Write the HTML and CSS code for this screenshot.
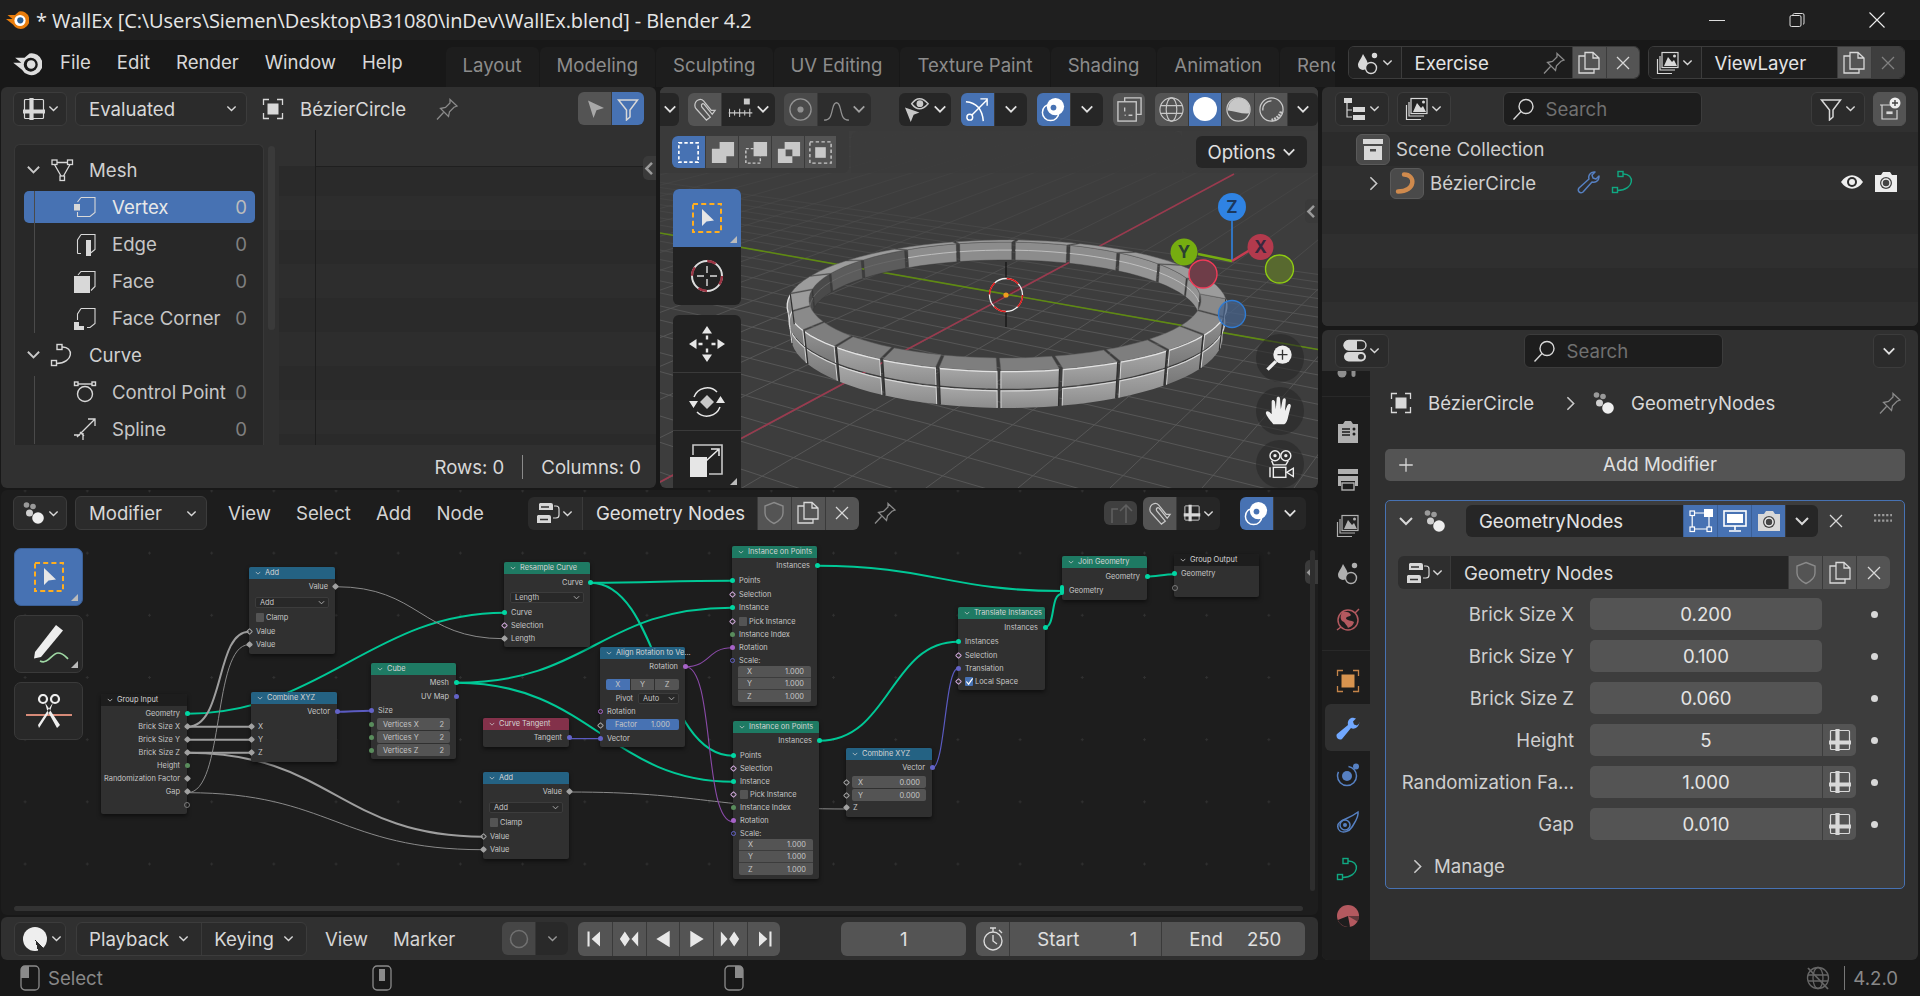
FILE: index.html
```html
<!DOCTYPE html>
<html lang="en">
<head>
<meta charset="utf-8">
<title>WallEx - Blender 4.2</title>
<link rel="stylesheet" href="styles.css">
</head>
<body>
<svg class="defs" width="0" height="0">
<defs>
<symbol id="chev" viewBox="0 0 12 12"><path d="M1.5 3.8 6 8.3l4.5-4.5" fill="none" stroke="currentColor" stroke-width="1.5"/></symbol>
<symbol id="chevr" viewBox="0 0 12 12"><path d="M3.5 1 8.5 6l-5 5" fill="none" stroke="currentColor" stroke-width="1.3"/></symbol>
<symbol id="chevl" viewBox="0 0 12 12"><path d="M8 1.5 3.5 6 8 10.5" fill="none" stroke="currentColor" stroke-width="2"/></symbol>
<symbol id="logoc" viewBox="0 0 24 24"><path fill="#e87d0d" d="M14 3.5 10 7H2.5l5 4H1l7 5.5A8.8 8.8 0 1 0 14 3.5z"/><circle cx="15" cy="12.5" r="5.6" fill="#fff"/><circle cx="15.300" cy="12.300" r="3.100" fill="#2a5f95"/></symbol>
<symbol id="logom" viewBox="0 0 24 24"><path fill="#ddd" d="M14 3.500 10 7H2.500l5 4H1l7 5.500A8.800 8.800 0 1 0 14 3.500z"/><circle cx="15" cy="12.500" r="5.600" fill="#181818"/><circle cx="15.300" cy="12.300" r="3.400" fill="#ddd"/></symbol>
<symbol id="sheet" viewBox="0 0 24 24"><rect x="2.500" y="2.500" width="19" height="19" fill="none" stroke="currentColor" stroke-width="1.200" rx="1"/><path d="M9.500 1v22M1 14.500h22" stroke="currentColor" stroke-width="4.200" fill="none"/></symbol>
<symbol id="obj" viewBox="0 0 24 24"><path d="M2.500 8V2.500H8M16 2.500h5.500V8M21.500 16v5.500H16M8 21.500H2.500V16" fill="none" stroke="currentColor" stroke-width="1.300"/><rect x="6.500" y="6.500" width="11" height="11" fill="currentColor"/></symbol>
<symbol id="pin" viewBox="0 0 24 24"><path d="M15 2.500 22 9l-3 1.200-4.500 4.500-1 4.800-8-8 5-1 4.500-4.500zM8.500 15.500 2 22.500" fill="none" stroke="currentColor" stroke-width="1.300"/></symbol>
<symbol id="cursor" viewBox="0 0 24 24"><path d="M5 3.500 21 11l-7.500 2.200L10.500 21z" fill="currentColor"/></symbol>
<symbol id="funnel" viewBox="0 0 24 24"><path d="M2.500 3h19L14 13v7l-3.500 3V13z" fill="none" stroke="currentColor" stroke-width="1.500"/></symbol>
<symbol id="mesh" viewBox="0 0 24 24"><g fill="none" stroke="currentColor" stroke-width="1.300"><rect x="2" y="2" width="5" height="4.500"/><rect x="17.500" y="2" width="5" height="4.500"/><rect x="10" y="18" width="4.500" height="4.500"/><path d="M7 4.500h10.500M4.500 6.500 11 18M20 6.500 13.500 18"/></g></symbol>
<symbol id="vx" viewBox="0 0 24 24"><path d="M8 2.500h14v15l-5 4H4.500V17M4.500 7 8 2.500" fill="none" stroke="currentColor" stroke-width="1.100"/><rect x="1" y="9" width="6" height="6.500" fill="currentColor"/></symbol>
<symbol id="ed" viewBox="0 0 24 24"><path d="M8 2.500h14v15l-5 4M4.500 21.500V8L8 2.500M4.500 21.500H8" fill="none" stroke="currentColor" stroke-width="1.100"/><rect x="13" y="8" width="5" height="16" fill="currentColor"/></symbol>
<symbol id="fc" viewBox="0 0 24 24"><path d="M5 6 8 2.500h14v15l-4 4" fill="none" stroke="currentColor" stroke-width="1.100"/><rect x="1" y="7" width="16" height="17" fill="currentColor"/></symbol>
<symbol id="fcc" viewBox="0 0 24 24"><path d="M8 2.500h14v15l-5 4h-3M4.500 14V8L8 2.500" fill="none" stroke="currentColor" stroke-width="1.100"/><path d="M1 16h5v4h5v4H1z" fill="currentColor"/></symbol>
<symbol id="curve" viewBox="0 0 24 24"><g fill="none" stroke="currentColor" stroke-width="1.400"><rect x="7" y="1.500" width="5" height="5"/><rect x="1.500" y="17.500" width="5" height="5"/><path d="M12 4c12-.5 12 16-5.500 16.500"/></g></symbol>
<symbol id="cpoint" viewBox="0 0 24 24"><g fill="none" stroke="currentColor" stroke-width="1.400"><circle cx="12" cy="14" r="7.500"/><path d="M5 4h14"/><rect x="1.500" y="2" width="3.500" height="3.500"/><rect x="19" y="2" width="3.500" height="3.500"/></g></symbol>
<symbol id="spline" viewBox="0 0 24 24"><g fill="none" stroke="currentColor" stroke-width="1.300"><path d="M1 18h6M10 23l0-7M4 20 22 2M15 2h7v7M7 15l4 4"/></g></symbol>
<symbol id="selbox" viewBox="0 0 36 36"><rect x="4" y="4" width="28" height="28" fill="none" stroke="#ffae1f" stroke-width="2" stroke-dasharray="5 3.200"/><path d="M13 9 25 20.500l-7.500 1L13 26z" fill="#e6e6e6"/></symbol>
<symbol id="cursor3d" viewBox="0 0 36 36"><circle cx="18" cy="18" r="15" fill="none" stroke="#ddd" stroke-width="2"/><circle cx="18" cy="18" r="15" fill="none" stroke="#9b3443" stroke-width="2.400" stroke-dasharray="9 14.500"/><path d="M18 8v7M18 21v7M8 18h7M21 18h7" stroke="#ddd" stroke-width="1.400"/></symbol>
<symbol id="move" viewBox="0 0 36 36"><path fill="#e6e6e6" d="M18 0l5 7.500H13zM18 36l-5-7.500h10zM0 18l7.500-5v10zM36 18l-7.500 5V13zM16.800 9.500h2.400v4h-2.400zM16.800 22.500h2.400v4h-2.400zM9.500 16.800h4v2.400h-4zM22.500 16.800h4v2.400h-4z"/></symbol>
<symbol id="rotate" viewBox="0 0 36 36"><path fill="none" stroke="#e6e6e6" stroke-width="1.500" d="M5 13a14 14 0 0 1 23-5M31 23a14 14 0 0 1-23 5"/><path fill="#e6e6e6" d="M0 17h9l-4.500 7zM27 19h9l-4.500-7z"/><path fill="#c8c8c8" d="M18 11l7 7-7 7-7-7z"/></symbol>
<symbol id="scale" viewBox="0 0 36 36"><path fill="none" stroke="#c8c8c8" stroke-width="1.600" d="M4 13V3h29v29H20"/><rect x="1" y="15" width="17" height="20" fill="#e6e6e6"/><path d="M17 19 29 8M22 7h8v7" fill="none" stroke="#e6e6e6" stroke-width="1.600"/></symbol>
<symbol id="annot" viewBox="0 0 46 40"><path d="M30 1l7 5.500L15 33l-7 1.500L9 28z" fill="#eee"/><path d="M14 37c8 4 12-8 18-8 5 0 7 3 10 6" fill="none" stroke="#9fd8a4" stroke-width="1.700"/></symbol>
<symbol id="cut" viewBox="0 0 46 34"><path d="M0 21h46" stroke="#d68a78" stroke-width="2"/><g fill="none" stroke="#eee" stroke-width="2.200"><circle cx="17" cy="5" r="4"/><circle cx="29" cy="5" r="4"/></g><path d="M19 8.500 34 31l-3 3-10-18zM27 8.500 12 31l1 3 11-17z" fill="#eee"/></symbol>
<symbol id="zoomg" viewBox="0 0 36 36"><circle cx="21" cy="14" r="11" fill="#eee"/><path d="M21 8v12M15 14h12" stroke="#333" stroke-width="1.600"/><path d="M13 22 3 32" stroke="#eee" stroke-width="4"/></symbol>
<symbol id="hand" viewBox="0 0 36 36"><path fill="#eee" d="M10 34c-3-4-9-11-9-14 1-3 4-2 7 2V7c0-3 3-3 4 0l1 9 1-13c0-3 4-3 4 0l1 13 2-11c1-3 4-3 4 0l-1 13 3-7c1-2 4-2 4 1l-3 12c-1 6-3 9-5 10z"/></symbol>
<symbol id="cam" viewBox="0 0 36 36"><g fill="none" stroke="#eee" stroke-width="1.700"><circle cx="12" cy="8" r="6"/><circle cx="25" cy="8" r="6"/><path d="M8 14l2 5h15l3-5"/><rect x="10" y="22" width="15" height="12"/><path d="M26 28l8-5v10z"/><path d="M6 22v12" /></g><circle cx="12" cy="8" r="2" fill="#eee"/><circle cx="25" cy="8" r="2" fill="#eee"/></symbol>
<symbol id="magnet" viewBox="0 0 28 28"><path d="M7 15 15 5c3-3 9-1 9 5 0 2-1 3-2 4L12 25l-4-3 9-11c1-3-2-4-3-2l-8 10-3-4z" fill="none" stroke="currentColor" stroke-width="1.300" transform="matrix(-1 0 0 1 28 0)"/></symbol>
<symbol id="inc" viewBox="0 0 32 28"><rect x="20" y="1" width="7" height="7" fill="currentColor"/><path d="M2 18h28M3 13v10M9 15v6M15 13v10M21 15v6M27 13v10" stroke="currentColor" stroke-width="1.300" fill="none"/></symbol>
<symbol id="prop" viewBox="0 0 28 28"><circle cx="14" cy="14" r="11" fill="none" stroke="currentColor" stroke-width="1.400"/><circle cx="14" cy="14" r="3.200" fill="currentColor"/></symbol>
<symbol id="falloff" viewBox="0 0 28 28"><path d="M1 25c6 0 7-3 9-12 2-8 6-8 8 0 2 9 3 12 9 12" fill="none" stroke="currentColor" stroke-width="1.300"/></symbol>
<symbol id="vis" viewBox="0 0 28 28"><path d="M8 8c5-7 11-7 17 0-6 7-12 7-17 0z" fill="none" stroke="currentColor" stroke-width="1.500"/><circle cx="16.500" cy="8" r="3.500" fill="currentColor"/><path d="M1 12 16 17l-6 2.500L7 27z" fill="currentColor"/></symbol>
<symbol id="giz" viewBox="0 0 28 28"><path d="M2 6c12 1 17 8 18 20" fill="none" stroke="#fff" stroke-width="1.500"/><circle cx="6" cy="22" r="3" fill="none" stroke="#fff" stroke-width="1.500"/><path d="M8 20 24 4M17 3h7v7" fill="none" stroke="#fff" stroke-width="1.500"/></symbol>
<symbol id="over" viewBox="0 0 28 28"><circle cx="16" cy="11" r="9" fill="#fff"/><circle cx="11" cy="17" r="8.500" fill="none" stroke="#fff" stroke-width="1.500"/><circle cx="14" cy="12" r="3" fill="#4772b3"/></symbol>
<symbol id="xray" viewBox="0 0 28 28"><g fill="none" stroke="currentColor" stroke-width="1.400"><path d="M9 6V2h17v17h-5"/><rect x="2" y="6" width="19" height="20"/></g><path d="M9 12v4M13 20h4M9 20h1" stroke="currentColor" stroke-width="1.400"/></symbol>
<symbol id="swire" viewBox="0 0 28 28"><g fill="none" stroke="currentColor" stroke-width="1.200"><circle cx="14" cy="14" r="12"/><ellipse cx="14" cy="14" rx="5.500" ry="12"/><path d="M3 10h22M3 18h22"/></g></symbol>
<symbol id="smat" viewBox="0 0 28 28"><circle cx="14" cy="14" r="12" fill="none" stroke="currentColor" stroke-width="1.300"/><path d="M14 2a12 12 0 0 1 11 16c-7 1-14-2-22-3A12 12 0 0 1 14 2z" fill="currentColor"/></symbol>
<symbol id="srend" viewBox="0 0 28 28"><circle cx="14" cy="14" r="12" fill="none" stroke="currentColor" stroke-width="1.300"/><path d="M5 15A9 9 0 0 1 14 5" fill="none" stroke="currentColor" stroke-width="1.300"/><path d="M14 25c5-1 9-5 10-9" fill="none" stroke="currentColor" stroke-width="3" stroke-dasharray="2 1"/></symbol>
<symbol id="b1" viewBox="0 0 28 28"><rect x="4" y="4" width="20" height="20" fill="none" stroke="#fff" stroke-width="1.700" stroke-dasharray="3.500 2.200"/></symbol>
<symbol id="b2" viewBox="0 0 28 28"><path d="M11 3h15v15h-8v7H3V10h8z" fill="currentColor"/></symbol>
<symbol id="b3" viewBox="0 0 28 28"><path d="M12 3h14v15H12z" fill="currentColor"/><rect x="4" y="10" width="15" height="15" fill="none" stroke="currentColor" stroke-width="1.500" stroke-dasharray="3 2"/></symbol>
<symbol id="b4" viewBox="0 0 28 28"><path d="M10 3h16v15h-8v7H3V10h7zM11 11v7h7v-7z" fill="currentColor" fill-rule="evenodd"/></symbol>
<symbol id="b5" viewBox="0 0 28 28"><rect x="3" y="3" width="22" height="22" fill="none" stroke="currentColor" stroke-width="1.500" stroke-dasharray="3.500 2.500"/><rect x="8.500" y="8.500" width="11" height="11" fill="currentColor"/></symbol>
<symbol id="scene" viewBox="0 0 24 24"><path d="M7 3c3 5 5 8 5 11a5 5 0 0 1-10 0c0-3 3-6 5-11z" fill="currentColor"/><circle cx="18.500" cy="4.500" r="2.700" fill="currentColor"/><circle cx="15" cy="17" r="5.500" fill="#222" stroke="currentColor" stroke-width="1.400"/><circle cx="15" cy="17" r="1.700" fill="none"/></symbol>
<symbol id="layer" viewBox="0 0 24 24"><g fill="none" stroke="currentColor" stroke-width="1.200"><rect x="6" y="1.500" width="16" height="15" fill="#222"/><path d="M4 5v14h15M1.500 8v14.500H16"/></g><path d="M8 15l4-9 4 5 2-2 3 6z" fill="currentColor"/><circle cx="18.500" cy="5" r="1.500" fill="currentColor"/></symbol>
<symbol id="nodes" viewBox="0 0 24 24"><circle cx="4.500" cy="4" r="2.800" fill="#9a9a9a"/><circle cx="11" cy="5.500" r="2.800" fill="#9a9a9a"/><circle cx="7.500" cy="12" r="3.500" fill="#cfcfcf"/><circle cx="16" cy="17" r="5.800" fill="#eee"/></symbol>
<symbol id="outl" viewBox="0 0 24 24"><rect x="1" y="1" width="8" height="5" fill="currentColor"/><path d="M4 6v14h5M4 13h5" fill="none" stroke="currentColor" stroke-width="1.200"/><rect x="10" y="10" width="12" height="5" fill="currentColor"/><rect x="10" y="18" width="12" height="5" fill="currentColor"/></symbol>
<symbol id="search" viewBox="0 0 24 24"><circle cx="14" cy="9.500" r="7" fill="none" stroke="currentColor" stroke-width="1.400"/><path d="M9 14.500 1.500 22.500" stroke="currentColor" stroke-width="1.400"/></symbol>
<symbol id="newcol" viewBox="0 0 24 24"><g fill="none" stroke="currentColor" stroke-width="1.200"><path d="M3 8h11M5 8v14h15v-9"/><rect x="10" y="15" width="5" height="1.500" fill="currentColor"/></g><circle cx="18" cy="6" r="5.500" fill="#eee"/><path d="M18 3v6M15 6h6" stroke="#444" stroke-width="1.400"/></symbol>
<symbol id="archive" viewBox="0 0 24 24"><path d="M2 2h20v5H2zM3 9h18v14H3z" fill="currentColor"/><rect x="9" y="12" width="6" height="2.500" fill="#4a4a4a"/></symbol>
<symbol id="bzc" viewBox="0 0 24 24"><path d="M9 3.500c12 0 12 17-6 17" fill="none" stroke="#cf8a4d" stroke-width="4.400" stroke-linecap="round"/></symbol>
<symbol id="wrench" viewBox="0 0 24 24"><path d="M22 7c0 4-4 6-7 5L6 22c-3 2-6-1-4-4l10-9c-1-3 1-7 5-7l1 0-3 3 1 3 3 1 3-3z" fill="none" stroke="currentColor" stroke-width="1.500" stroke-linejoin="round"/></symbol>
<symbol id="wrenchf" viewBox="0 0 24 24"><path d="M23 7c0 4-5 7-8 5L6 23c-3 2-7-2-5-5l11-9c-1-4 2-8 6-7l2 .5-3 3 1 3 3 1 3-3z" fill="currentColor"/></symbol>
<symbol id="eye" viewBox="0 0 24 24"><path d="M1 12c6-9 16-9 22 0-6 9-16 9-22 0z" fill="#eee"/><circle cx="12" cy="12" r="5" fill="#2c2c2c"/><circle cx="12" cy="12" r="3" fill="#eee"/></symbol>
<symbol id="camf" viewBox="0 0 24 24"><path d="M1 5h6l2-3h7l2 3h5v17H1z" fill="currentColor"/><circle cx="12" cy="13" r="6" fill="#444"/><circle cx="12" cy="13" r="4" fill="none" stroke="#eee" stroke-width="1.500"/></symbol>
<symbol id="toggles" viewBox="0 0 24 24"><rect x="1" y="1.500" width="22" height="9.500" rx="4.700" fill="none" stroke="currentColor" stroke-width="1.400"/><path d="M5.500 1.500H14v9.500H5.500a4.700 4.700 0 0 1 0-9.500z" fill="currentColor"/><rect x="1" y="13" width="22" height="9.500" rx="4.700" fill="currentColor"/><rect x="15" y="15" width="6" height="5.500" rx="2.700" fill="#333"/></symbol>
<symbol id="group" viewBox="0 0 24 24"><path d="M4 2h11a2 2 0 0 1 2 2v5H3V3z M2 14h11a2 2 0 0 1 2 2v6H1v-7z" fill="currentColor"/><path d="M5 6h8M4 18.500h8" stroke="#333" stroke-width="1.300"/><path d="M18 5h2c2 0 3 1 3 3v6c0 2-1 3-3 3h-3M17 20h0" fill="none" stroke="currentColor" stroke-width="1.200"/></symbol>
<symbol id="shield" viewBox="0 0 24 24"><path d="M12 1.500 21 5v7c0 5-4 8-9 10.500C7 20 3 17 3 12V5z" fill="none" stroke="currentColor" stroke-width="1.400"/></symbol>
<symbol id="dup" viewBox="0 0 24 24"><path d="M8 5H2v17h15v-4M8 1.500h8l6 5.500v11H8zM16 1.500V7h6" fill="none" stroke="currentColor" stroke-width="1.300"/></symbol>
<symbol id="x" viewBox="0 0 24 24"><path d="M4 4 20 20M20 4 4 20" stroke="currentColor" stroke-width="1.700"/></symbol>
<symbol id="editm" viewBox="0 0 24 24"><g fill="none" stroke="#fff" stroke-width="1.200"><rect x="1" y="2" width="4.500" height="4.500"/><rect x="1" y="18" width="4.500" height="4.500"/><rect x="18" y="18" width="4.500" height="4.500"/><path d="M5.500 4H16M3.200 6.500V18M5.500 20h12.500M20 8v10"/></g><rect x="15" y="0" width="9" height="8" fill="#fff"/></symbol>
<symbol id="mon" viewBox="0 0 24 24"><rect x="1" y="2" width="22" height="15" fill="none" stroke="#fff" stroke-width="1.600"/><rect x="4" y="5" width="16" height="9" fill="#fff"/><path d="M12 17v4M6 22h12" stroke="#fff" stroke-width="1.600"/></symbol>
<symbol id="dots" viewBox="0 0 20 10"><path d="M0 0h2.500v2.500H0zM4.500 0H7v2.500H4.500zM9 0h2.500v2.500H9zM13.500 0H16v2.500h-2.500zM18 0h2v2.500h-2zM0 6h2.500v2.500H0zM4.500 6H7v2.500H4.500zM9 6h2.500v2.500H9zM13.500 6H16v2.500h-2.500zM18 6h2v2.500h-2z" fill="currentColor"/></symbol>
<symbol id="plus" viewBox="0 0 24 24"><path d="M12 3v18M3 12h18" stroke="currentColor" stroke-width="1.700"/></symbol>
<symbol id="ttool" viewBox="0 0 24 24"><circle cx="6" cy="12" r="4.500" fill="currentColor"/><rect x="15.500" y="1" width="4" height="15" rx="2" fill="currentColor"/></symbol>
<symbol id="trender" viewBox="0 0 24 24"><path d="M2 4h5l2-3h6l2 3h5v19H2z" fill="currentColor"/><path d="M6 9h8M6 12h8M6 15h8" stroke="#1d1d1d" stroke-width="1.300"/><circle cx="18" cy="9" r="1.500" fill="#1d1d1d"/><circle cx="18" cy="14" r="1.500" fill="#1d1d1d"/></symbol>
<symbol id="toutput" viewBox="0 0 24 24"><path d="M2 2h20v5H2zM2 9h20v10h-3v-5H5v5H2z" fill="currentColor"/><rect x="6" y="16" width="12" height="7" fill="none" stroke="currentColor" stroke-width="1.400"/></symbol>
<symbol id="tworld" viewBox="0 0 24 24"><circle cx="12" cy="12" r="10" fill="none" stroke="currentColor" stroke-width="1.500"/><path d="M6 4c4-1 8 0 9 3-1 2-4 1-5 3 0 3 6 2 8 4-1 4-4 5-6 6-1-3-3-4-4-6-3-1-4-4-3-7z" fill="currentColor"/><path d="M1 22l4-3M19 5l4-4" stroke="currentColor" stroke-width="1.500"/></symbol>
<symbol id="tobj" viewBox="0 0 24 24"><path d="M1.500 7V1.500H7M17 1.500h5.500V7M22.500 17v5.500H17M7 22.500H1.500V17" fill="none" stroke="#c48449" stroke-width="1.300"/><rect x="5.500" y="5.500" width="13" height="13" fill="#d8944f"/></symbol>
<symbol id="tpart" viewBox="0 0 24 24"><circle cx="11" cy="13" r="9.500" fill="none" stroke="currentColor" stroke-width="1.500" stroke-dasharray="34 12"/><circle cx="11" cy="13" r="5" fill="currentColor"/><circle cx="20" cy="3.500" r="3" fill="currentColor"/></symbol>
<symbol id="tphys" viewBox="0 0 24 24"><path d="M22 2c1 5-3 10-6 15-3 5-9 6-12 4s-3-7 0-9C8 9 14 8 22 2z" fill="none" stroke="currentColor" stroke-width="1.500"/><circle cx="9" cy="15" r="5" fill="none" stroke="currentColor" stroke-width="1.500"/><circle cx="9" cy="15" r="2" fill="currentColor"/></symbol>
<symbol id="tmat" viewBox="0 0 24 24"><circle cx="12" cy="12" r="11" fill="#b3595f"/><path d="M12 12 1.800 16A11 11 0 0 0 14 22.800z" fill="#1d1d1d"/><path d="M12 12 23 12A11 11 0 0 1 21.500 17.500z" fill="#1d1d1d" opacity=".55"/></symbol>
<symbol id="first" viewBox="0 0 24 24"><path d="M3 3h2.500v18H3zM8 12l10-9v18z" fill="currentColor"/></symbol>
<symbol id="prevk" viewBox="0 0 24 24"><path d="M7 3l6 9-6 9-6-9zM23 3v18l-8-9z" fill="currentColor"/></symbol>
<symbol id="rev" viewBox="0 0 24 24"><path d="M20 2v20L4 12z" fill="currentColor"/></symbol>
<symbol id="play" viewBox="0 0 24 24"><path d="M4 2v20l16-10z" fill="currentColor"/></symbol>
<symbol id="nextk" viewBox="0 0 24 24"><path d="M17 3l6 9-6 9-6-9zM1 3v18l8-9z" fill="currentColor"/></symbol>
<symbol id="last" viewBox="0 0 24 24"><path d="M21 3h-2.500v18H21zM16 12 6 3v18z" fill="currentColor"/></symbol>
<symbol id="recdot" viewBox="0 0 24 24"><circle cx="12" cy="12" r="8.500" fill="none" stroke="currentColor" stroke-width="1.500"/></symbol>
<symbol id="timer" viewBox="0 0 24 24"><circle cx="12" cy="14" r="9" fill="none" stroke="currentColor" stroke-width="1.400"/><path d="M12 8v6l4 3M9 1h6M12 1v4M18 3l3 3" fill="none" stroke="currentColor" stroke-width="1.400"/></symbol>
<symbol id="ml" viewBox="0 0 20 26"><rect x="1" y="1" width="18" height="24" rx="4" fill="none" stroke="currentColor" stroke-width="1.300"/><path d="M1 13V5a4 4 0 0 1 4-4h4v12z" fill="currentColor"/></symbol>
<symbol id="mm" viewBox="0 0 20 26"><rect x="1" y="1" width="18" height="24" rx="4" fill="none" stroke="currentColor" stroke-width="1.300"/><rect x="7" y="4" width="6" height="12" fill="currentColor"/></symbol>
<symbol id="mr" viewBox="0 0 20 26"><rect x="1" y="1" width="18" height="24" rx="4" fill="none" stroke="currentColor" stroke-width="1.300"/><path d="M19 13V5a4 4 0 0 0-4-4h-4v12z" fill="currentColor"/></symbol>
<symbol id="globe" viewBox="0 0 24 24"><g fill="none" stroke="currentColor" stroke-width="1.300"><circle cx="12" cy="12" r="10.500"/><ellipse cx="12" cy="12" rx="5" ry="10.500"/><path d="M2 9h20M2 15h20"/><path d="M2 2l20 21" stroke-width="1.800"/></g></symbol>
<symbol id="parent" viewBox="0 0 24 24"><path d="M3 22V8h6M17 22V4M11 10l6-6 6 6" fill="none" stroke="currentColor" stroke-width="1.500"/></symbol>
<symbol id="tri" viewBox="0 0 10 10"><path d="M10 0v10H0z" fill="#bbb"/></symbol>
<symbol id="check" viewBox="0 0 10 10"><path d="M1.500 5 4 8 8.500 1.500" fill="none" stroke="#fff" stroke-width="1.300"/></symbol>
<linearGradient id="brick" x1="0" y1="0" x2="0" y2="1"><stop offset="0" stop-color="#a8a8a8"/><stop offset="1" stop-color="#8c8c8c"/></linearGradient>
<linearGradient id="brickd" x1="0" y1="0" x2="0" y2="1"><stop offset="0" stop-color="#929292"/><stop offset="1" stop-color="#777"/></linearGradient>
<linearGradient id="gridfade" gradientUnits="userSpaceOnUse" x1="0" y1="150" x2="0" y2="330"><stop offset="0" stop-color="#4a4a4a" stop-opacity=".2"/><stop offset="1" stop-color="#565656"/></linearGradient>
</defs>
</svg>

<header class="titlebar">
  <svg class="ic-22 title-logo"><use href="#logoc"/></svg>
  <span class="title-text">* WallEx [C:\Users\Siemen\Desktop\B31080\inDev\WallEx.blend] - Blender 4.2</span>
  <div class="win-btns">
    <span class="win-btn"><i class="win-min"></i></span>
    <span class="win-btn"><svg class="ic-16" viewBox="0 0 16 16"><path d="M4 3.500V2.500a1.500 1.500 0 0 1 1.500-1h8a1.500 1.500 0 0 1 1.500 1.500v8a1.500 1.500 0 0 1-1 1.500M2.500 3.500h8a1.500 1.500 0 0 1 1.500 1.500v8a1.500 1.500 0 0 1-1.500 1.500h-8A1.500 1.500 0 0 1 1 13V5a1.500 1.500 0 0 1 1.500-1.500z" fill="none" stroke="#ddd"/></svg></span>
    <span class="win-btn"><svg class="ic-16" viewBox="0 0 16 16"><path d="M.500.500l15 15M15.500.500l-15 15" stroke="#eee" stroke-width="1.100"/></svg></span>
  </div>
</header>

<nav class="topbar">
  <svg class="ic-28 top-logo"><use href="#logom"/></svg>
  <ul class="menu">
    <li>File</li><li>Edit</li><li>Render</li><li>Window</li><li>Help</li>
  </ul>
  <div class="workspaces">
    <span class="ws">Layout</span><span class="ws">Modeling</span><span class="ws">Sculpting</span><span class="ws">UV Editing</span><span class="ws">Texture Paint</span><span class="ws">Shading</span><span class="ws">Animation</span><span class="ws">Rendering</span>
  </div>
  <div class="selector sel-scene">
    <span class="sel-ic"><svg class="ic"><use href="#scene"/></svg><svg class="ic-10"><use href="#chev"/></svg></span>
    <span class="sel-name">Exercise<svg class="ic dim sel-pin"><use href="#pin"/></svg></span>
    <span class="sel-b"><svg class="ic"><use href="#dup"/></svg></span>
    <span class="sel-b sel-bend"><svg class="ic-18"><use href="#x"/></svg></span>
  </div>
  <div class="selector sel-layer">
    <span class="sel-ic"><svg class="ic"><use href="#layer"/></svg><svg class="ic-10"><use href="#chev"/></svg></span>
    <span class="sel-name">ViewLayer</span>
    <span class="sel-b"><svg class="ic"><use href="#dup"/></svg></span>
    <span class="sel-b sel-bend off"><svg class="ic-18"><use href="#x"/></svg></span>
  </div>
</nav>

<main class="main">
<div class="col-left">
  <div class="row-top">

    <section class="area sheet-area">
      <div class="hdr">
        <span class="btn w54"><svg class="ic"><use href="#sheet"/></svg><svg class="ic-10"><use href="#chev"/></svg></span>
        <span class="btn dd w172">Evaluated<svg class="ic-10"><use href="#chev"/></svg></span>
        <svg class="ic ml14"><use href="#obj"/></svg>
        <span class="lbl ml15">BézierCircle</span>
        <svg class="ic dim ml29"><use href="#pin"/></svg>
        <span class="seg ml-auto">
          <span class="seg-b gray"><svg class="ic dim2"><use href="#cursor"/></svg></span>
          <span class="seg-b blue"><svg class="ic"><use href="#funnel"/></svg></span>
        </span>
      </div>
      <div class="sheet-body">
        <div class="dataset">
          <div class="ds-row top"><svg class="ic-14 ds-chev"><use href="#chev"/></svg><svg class="ic"><use href="#mesh"/></svg><span>Mesh</span></div>
          <div class="ds-sub">
            <div class="ds-row item sel"><svg class="ic"><use href="#vx"/></svg><span>Vertex</span><b>0</b></div>
            <div class="ds-row item"><svg class="ic"><use href="#ed"/></svg><span>Edge</span><b>0</b></div>
            <div class="ds-row item"><svg class="ic"><use href="#fc"/></svg><span>Face</span><b>0</b></div>
            <div class="ds-row item"><svg class="ic"><use href="#fcc"/></svg><span>Face Corner</span><b>0</b></div>
          </div>
          <div class="ds-row top"><svg class="ic-14 ds-chev"><use href="#chev"/></svg><svg class="ic"><use href="#curve"/></svg><span>Curve</span></div>
          <div class="ds-sub">
            <div class="ds-row item"><svg class="ic"><use href="#cpoint"/></svg><span>Control Point</span><b>0</b></div>
            <div class="ds-row item"><svg class="ic"><use href="#spline"/></svg><span>Spline</span><b>0</b></div>
          </div>
        </div>
        <div class="vscroll"></div>
        <div class="table">
          <div class="table-idx"></div>
          <div class="table-col"><div class="table-head"></div></div>
          <span class="side-tab tab-sheet"><svg class="ic-14"><use href="#chevl"/></svg></span>
        </div>
      </div>
      <div class="sheet-foot"><span>Rows: 0</span><i class="foot-sep"></i><span>Columns: 0</span></div>
    </section>

    <section class="area view-area">
      <svg id="scene3d" class="scene" viewBox="660 87 658 401">
        <path id="gridlines" fill="none" stroke="url(#gridfade)" stroke-width="1"/>
        <path d="M660 482 1234 174" stroke="#9a3a4e" stroke-width="1.600" fill="none"/>
        <path d="M660 233 1321 350" stroke="#5f8a12" stroke-width="1.600" fill="none"/>
        <g id="brickring"></g>
        <g>
          <path d="M1006 262v16M1006 310v17" stroke="#111" stroke-width="1.200"/>
          <circle cx="1006" cy="295" r="16.500" fill="none" stroke="#eee" stroke-width="1.300"/>
          <circle cx="1006" cy="295" r="16.500" fill="none" stroke="#e01a1a" stroke-width="1.500" stroke-dasharray="13 13"/>
          <path d="M992 303 1020 287" stroke="#6d2230" stroke-width="1.300"/>
          <circle cx="1006" cy="295" r="2.600" fill="#f29c1f"/>
        </g>
        <g class="gizmo">
          <path d="M1232 261V221" stroke="#2f83e3" stroke-width="1.600"/>
          <path d="M1232 261 1198 254" stroke="#76ad10" stroke-width="2.500"/>
          <path d="M1232 261 1250 250" stroke="#c73c50" stroke-width="2.500"/>
          <circle cx="1232" cy="207" r="14" fill="#2f83e3"/>
          <text x="1232" y="213" class="gz">Z</text>
          <circle cx="1184" cy="252" r="13.500" fill="#76ad10"/>
          <text x="1184" y="258" class="gz">Y</text>
          <circle cx="1260.500" cy="247" r="13" fill="#b33a4d"/>
          <text x="1260.500" y="253" class="gz">X</text>
          <circle cx="1203" cy="274" r="14" fill="#6e3d48" stroke="#f23a58" stroke-width="1.400"/>
          <circle cx="1279.500" cy="269" r="14" fill="#58692f" stroke="#8ecb12" stroke-width="1.400"/>
          <circle cx="1232" cy="314" r="13.500" fill="#45618a" fill-opacity=".75" stroke="#2f7bd3" stroke-width="1.400"/>
        </g>
      </svg>
      <div class="view-over">
        <div class="hdr hdr-view">
          <span class="vb w20 dark"><svg class="ic-12"><use href="#chev"/></svg></span>
          <span class="seg ml9">
            <span class="seg-b gray w33"><svg class="ic-28s"><use href="#magnet"/></svg></span>
            <span class="seg-b dark w54"><svg class="ic-28s"><use href="#inc"/></svg><svg class="ic-12"><use href="#chev"/></svg></span>
          </span>
          <span class="seg ml9 faded">
            <span class="seg-b gray w33"><svg class="ic-28s"><use href="#prop"/></svg></span>
            <span class="seg-b dark w54"><svg class="ic-28s"><use href="#falloff"/></svg><svg class="ic-12"><use href="#chev"/></svg></span>
          </span>
          <span class="seg ml28"><span class="seg-b dark w52"><svg class="ic-28s"><use href="#vis"/></svg><svg class="ic-12"><use href="#chev"/></svg></span></span>
          <span class="seg ml10">
            <span class="seg-b blue w33"><svg class="ic-28s"><use href="#giz"/></svg></span>
            <span class="seg-b dark w33"><svg class="ic-12"><use href="#chev"/></svg></span>
          </span>
          <span class="seg ml10">
            <span class="seg-b blue w33"><svg class="ic-28s"><use href="#over"/></svg></span>
            <span class="seg-b dark w33"><svg class="ic-12"><use href="#chev"/></svg></span>
          </span>
          <span class="seg ml10"><span class="seg-b gray w32"><svg class="ic-28s"><use href="#xray"/></svg></span></span>
          <span class="seg ml10">
            <span class="seg-b gray w33"><svg class="ic-28s"><use href="#swire"/></svg></span>
            <span class="seg-b blue w33"><i class="solid"></i></span>
            <span class="seg-b gray w33"><svg class="ic-28s"><use href="#smat"/></svg></span>
            <span class="seg-b gray w33"><svg class="ic-28s"><use href="#srend"/></svg></span>
            <span class="seg-b dark w31"><svg class="ic-12"><use href="#chev"/></svg></span>
          </span>
        </div>
        <div class="tool-row">
          <div class="tool-left">
            <span class="seg h32">
              <span class="seg-b blue w33"><svg class="ic-28s"><use href="#b1"/></svg></span>
              <span class="seg-b gray w33"><svg class="ic-28s"><use href="#b2"/></svg></span>
              <span class="seg-b gray w33"><svg class="ic-28s"><use href="#b3"/></svg></span>
              <span class="seg-b gray w33"><svg class="ic-28s"><use href="#b4"/></svg></span>
              <span class="seg-b gray w32"><svg class="ic-28s"><use href="#b5"/></svg></span>
            </span>
          </div>
          <div class="tool-mid"></div>
          <div class="tool-right"><span class="opt">Options<svg class="ic-12"><use href="#chev"/></svg></span></div>
        </div>
        <div class="view-tools">
          <div class="tbox">
            <span class="tb tb-on"><svg class="ic-36"><use href="#selbox"/></svg><svg class="ic-tri"><use href="#tri"/></svg></span>
            <span class="tb"><svg class="ic-36"><use href="#cursor3d"/></svg></span>
          </div>
          <div class="tbox tbox2">
            <span class="tb bl"><svg class="ic-36"><use href="#move"/></svg></span>
            <span class="tb bl"><svg class="ic-36"><use href="#rotate"/></svg></span>
            <span class="tb"><svg class="ic-36"><use href="#scale"/></svg><svg class="ic-tri"><use href="#tri"/></svg></span>
          </div>
        </div>
        <div class="nav-giz">
          <span class="nv"><svg class="ic-28"><use href="#zoomg"/></svg></span>
          <span class="nv"><svg class="ic-28"><use href="#hand"/></svg></span>
          <span class="nv"><svg class="ic-28"><use href="#cam"/></svg></span>
        </div>
        <span class="side-tab tab-view"><svg class="ic-14"><use href="#chevl"/></svg></span>
      </div>
    </section>
  </div>

  <section class="area node-area">
    <svg class="wires" viewBox="1 490 1317 425">
      <g fill="none" stroke="#00c896" stroke-width="2">
        <path d="M187.500 713.700C320 713.700 374 612.700 504 612.700"/>
        <path d="M456.500 682.700C590 682.700 600 607.700 731.700 607.700"/>
        <path d="M456.500 682.700C590 682.700 610 781.700 733 781.700"/>
        <path d="M590.500 582.700C650 582.700 670 580.700 731.700 580.700"/>
        <path d="M590.500 582.700C660 582.700 660 755.700 733 755.700"/>
        <path d="M817.500 565.700C930 565.700 950 591 1061.700 591"/>
        <path d="M819.500 740.700C890 740.700 890 641.700 958 641.700"/>
        <path d="M1044.500 627.300C1056 627.300 1050 594 1061.700 594"/>
        <path d="M1147.500 576.700C1155 576.700 1165 574.300 1173.700 574.300"/>
      </g>
      <g fill="none" stroke="#9e9e9e" stroke-width="2">
        <path d="M187.500 726.700H251M187.500 739.700H251M187.500 752.700H251"/>
        <path d="M187.500 726.700C225 726.700 215 631.700 249 631.700"/>
        <path d="M187.500 752.700C330 752.700 340 836.700 483 836.700"/>
      </g>
      <g fill="none" stroke="#8a8a8a" stroke-width="1">
        <path d="M187.500 792.700C225 792.700 212 644.700 249 644.700"/>
        <path d="M187.500 792.700C330 792.700 340 849.700 483 849.700"/>
        <path d="M335.500 586.700C420 586.700 420 638.700 504 638.700"/>
        <path d="M569.500 792C700 792 715 809 846 809"/>
      </g>
      <g fill="none" stroke="#5b5bc2">
        <path stroke-width="2" d="M336.500 711.700C350 711.700 357 710.700 370.700 710.700"/>
        <path stroke-width="1.200" d="M569.500 738.700H599.700M932.500 767.700C945 767.700 945 668.300 958 668.300"/>
      </g>
      <g fill="none" stroke="#8a4aa8" stroke-width="1.100">
        <path d="M685.500 666.700C710 666.700 708 647.700 731.700 647.700"/>
        <path d="M685.500 666.700C715 666.700 703 821.700 733 821.700"/>
      </g>
    </svg>

    <div class="hdr hdr-node">
      <span class="btn w54"><svg class="ic"><use href="#nodes"/></svg><svg class="ic-10"><use href="#chev"/></svg></span>
      <span class="btn dd w132">Modifier<svg class="ic-10"><use href="#chev"/></svg></span>
      <span class="menu-i ml21">View</span><span class="menu-i">Select</span><span class="menu-i">Add</span><span class="menu-i">Node</span>
      <span class="seg ml44">
        <span class="seg-b line w54"><svg class="ic"><use href="#group"/></svg><svg class="ic-10"><use href="#chev"/></svg></span>
        <span class="seg-b dark fname">Geometry Nodes</span>
        <span class="seg-b gray w34"><svg class="ic dim"><use href="#shield"/></svg></span>
        <span class="seg-b gray w34"><svg class="ic"><use href="#dup"/></svg></span>
        <span class="seg-b gray w34"><svg class="ic-18"><use href="#x"/></svg></span>
      </span>
      <svg class="ic dim ml14"><use href="#pin"/></svg>
      <span class="ml-auto node-right">
        <span class="seg-b gray w33 round faded"><svg class="ic dim"><use href="#parent"/></svg></span>
        <span class="seg ml6">
          <span class="seg-b gray w33"><svg class="ic-28s"><use href="#magnet"/></svg></span>
          <span class="seg-b dark w44"><svg class="ic-18"><use href="#sheet"/></svg><svg class="ic-10"><use href="#chev"/></svg></span>
        </span>
        <span class="seg ml20">
          <span class="seg-b blue w33"><svg class="ic-28s"><use href="#over"/></svg></span>
          <span class="seg-b dark w33"><svg class="ic-12"><use href="#chev"/></svg></span>
        </span>
      </span>
    </div>

    <div class="node-tools">
      <span class="ntb on"><svg class="ic-36"><use href="#selbox"/></svg><svg class="ic-tri"><use href="#tri"/></svg></span>
      <span class="ntb"><svg class="ic-annot"><use href="#annot"/></svg><svg class="ic-tri"><use href="#tri"/></svg></span>
      <span class="ntb"><svg class="ic-cut"><use href="#cut"/></svg></span>
    </div>

    <div class="node n-ginput dark-h">
      <div class="nh"><svg class="nh-c"><use href="#chev"/></svg>Group Input</div>
      <div class="nb p1">
        <div class="nr r">Geometry<i class="sk o geo"></i></div>
        <div class="nr r">Brick Size X<i class="sk o val"></i></div>
        <div class="nr r">Brick Size Y<i class="sk o val"></i></div>
        <div class="nr r">Brick Size Z<i class="sk o val"></i></div>
        <div class="nr r">Height<i class="sk o int"></i></div>
        <div class="nr r">Randomization Factor<i class="sk o val"></i></div>
        <div class="nr r">Gap<i class="sk o val"></i></div>
        <div class="nr r"><i class="sk o empty"></i></div>
      </div>
    </div>

    <div class="node n-add1 blue-h">
      <div class="nh"><svg class="nh-c"><use href="#chev"/></svg>Add</div>
      <div class="nb p1">
        <div class="nr r">Value<i class="sk o val"></i></div>
        <div class="ndd m4"><span>Add</span><svg class="ic-7"><use href="#chev"/></svg></div>
        <div class="nr m3"><i class="ncheck"></i>Clamp</div>
        <div class="nr m1">Value<i class="sk i hol"></i></div>
        <div class="nr">Value<i class="sk i val"></i></div>
      </div>
    </div>

    <div class="node n-comb1 blue-h">
      <div class="nh"><svg class="nh-c"><use href="#chev"/></svg>Combine XYZ</div>
      <div class="nb p1">
        <div class="nr r">Vector<i class="sk o vec"></i></div>
        <div class="nr m2">X<i class="sk i val"></i></div>
        <div class="nr">Y<i class="sk i val"></i></div>
        <div class="nr">Z<i class="sk i val"></i></div>
      </div>
    </div>

    <div class="node n-cube green-h">
      <div class="nh"><svg class="nh-c"><use href="#chev"/></svg>Cube</div>
      <div class="nb p1">
        <div class="nr r">Mesh<i class="sk o geo"></i></div>
        <div class="nr r m1">UV Map<i class="sk o vec"></i></div>
        <div class="nr m1">Size<i class="sk i vec"></i></div>
        <div class="nf m1"><span class="nf-c">Vertices X</span><span>2</span><i class="sk i2 int"></i></div>
        <div class="nf g1"><span class="nf-c">Vertices Y</span><span>2</span><i class="sk i2 int"></i></div>
        <div class="nf g1"><span class="nf-c">Vertices Z</span><span>2</span><i class="sk i2 int"></i></div>
      </div>
    </div>

    <div class="node n-resample green-h">
      <div class="nh"><svg class="nh-c"><use href="#chev"/></svg>Resample Curve</div>
      <div class="nb p2">
        <div class="nr r">Curve<i class="sk o geo"></i></div>
        <div class="ndd m3"><span>Length</span><svg class="ic-7"><use href="#chev"/></svg></div>
        <div class="nr m3">Curve<i class="sk i geo"></i></div>
        <div class="nr">Selection<i class="sk i boolh"></i></div>
        <div class="nr">Length<i class="sk i val"></i></div>
      </div>
    </div>

    <div class="node n-iop1 green-h">
      <div class="nh"><svg class="nh-c"><use href="#chev"/></svg>Instance on Points</div>
      <div class="nb p1">
        <div class="nr r">Instances<i class="sk o geo"></i></div>
        <div class="nr m2">Points<i class="sk i geo"></i></div>
        <div class="nr m1">Selection<i class="sk i boolh"></i></div>
        <div class="nr">Instance<i class="sk i geo"></i></div>
        <div class="nr m1"><i class="ncheck"></i>Pick Instance<i class="sk i boolh"></i></div>
        <div class="nr">Instance Index<i class="sk i int"></i></div>
        <div class="nr">Rotation<i class="sk i rot"></i></div>
        <div class="nr">Scale:<i class="sk i vech"></i></div>
        <div class="nstack">
          <div class="nf2"><span class="nf-c">X</span><span>1.000</span></div>
          <div class="nf2"><span class="nf-c">Y</span><span>1.000</span></div>
          <div class="nf2"><span class="nf-c">Z</span><span>1.000</span></div>
        </div>
      </div>
    </div>

    <div class="node n-iop2 green-h">
      <div class="nh"><svg class="nh-c"><use href="#chev"/></svg>Instance on Points</div>
      <div class="nb p1">
        <div class="nr r">Instances<i class="sk o geo"></i></div>
        <div class="nr m2">Points<i class="sk i geo"></i></div>
        <div class="nr">Selection<i class="sk i boolh"></i></div>
        <div class="nr">Instance<i class="sk i geo"></i></div>
        <div class="nr"><i class="ncheck"></i>Pick Instance<i class="sk i boolh"></i></div>
        <div class="nr">Instance Index<i class="sk i int"></i></div>
        <div class="nr">Rotation<i class="sk i rot"></i></div>
        <div class="nr">Scale:<i class="sk i vech"></i></div>
        <div class="nstack">
          <div class="nf2"><span class="nf-c">X</span><span>1.000</span></div>
          <div class="nf2"><span class="nf-c">Y</span><span>1.000</span></div>
          <div class="nf2"><span class="nf-c">Z</span><span>1.000</span></div>
        </div>
      </div>
    </div>

    <div class="node n-align blue-h">
      <div class="nh"><svg class="nh-c"><use href="#chev"/></svg>Align Rotation to Ve...</div>
      <div class="nb p1">
        <div class="nr r">Rotation<i class="sk o rot"></i></div>
        <div class="nxyz"><span class="on">X</span><span>Y</span><span>Z</span></div>
        <div class="npivot"><label>Pivot</label><div class="ndd small"><span>Auto</span><svg class="ic-7"><use href="#chev"/></svg></div></div>
        <div class="nr m1">Rotation<i class="sk i roth"></i></div>
        <div class="nfac"><span>Factor</span><span>1.000</span><i class="sk i2 hol"></i></div>
        <div class="nr m2">Vector<i class="sk i vec"></i></div>
      </div>
    </div>

    <div class="node n-tangent red-h">
      <div class="nh"><svg class="nh-c"><use href="#chev"/></svg>Curve Tangent</div>
      <div class="nb p1"><div class="nr r">Tangent<i class="sk o vec"></i></div></div>
    </div>

    <div class="node n-add2 blue-h">
      <div class="nh"><svg class="nh-c"><use href="#chev"/></svg>Add</div>
      <div class="nb p1">
        <div class="nr r">Value<i class="sk o val"></i></div>
        <div class="ndd m4"><span>Add</span><svg class="ic-7"><use href="#chev"/></svg></div>
        <div class="nr m3"><i class="ncheck"></i>Clamp</div>
        <div class="nr m1">Value<i class="sk i hol"></i></div>
        <div class="nr">Value<i class="sk i val"></i></div>
      </div>
    </div>

    <div class="node n-comb2 blue-h">
      <div class="nh"><svg class="nh-c"><use href="#chev"/></svg>Combine XYZ</div>
      <div class="nb p1">
        <div class="nr r">Vector<i class="sk o vec"></i></div>
        <div class="nf m2"><span class="nf-c">X</span><span>0.000</span><i class="sk i2 hol"></i></div>
        <div class="nf g1"><span class="nf-c">Y</span><span>0.000</span><i class="sk i2 hol"></i></div>
        <div class="nr">Z<i class="sk i val"></i></div>
      </div>
    </div>

    <div class="node n-translate green-h">
      <div class="nh"><svg class="nh-c"><use href="#chev"/></svg>Translate Instances</div>
      <div class="nb p2">
        <div class="nr r">Instances<i class="sk o geo"></i></div>
        <div class="nr m1">Instances<i class="sk i geo"></i></div>
        <div class="nr m1">Selection<i class="sk i boolh"></i></div>
        <div class="nr">Translation<i class="sk i vec"></i></div>
        <div class="nr"><i class="ncheck on"><svg class="ic-9"><use href="#check"/></svg></i>Local Space<i class="sk i boolh"></i></div>
      </div>
    </div>

    <div class="node n-join green-h">
      <div class="nh"><svg class="nh-c"><use href="#chev"/></svg>Join Geometry</div>
      <div class="nb p2">
        <div class="nr r">Geometry<i class="sk o geo"></i></div>
        <div class="nr m1">Geometry<i class="sk i multi"></i></div>
      </div>
    </div>

    <div class="node n-output dark-h">
      <div class="nh"><svg class="nh-c"><use href="#chev"/></svg>Group Output</div>
      <div class="nb p1">
        <div class="nr">Geometry<i class="sk i geo"></i></div>
        <div class="nr m1"><i class="sk i empty"></i></div>
      </div>
    </div>

    <span class="side-tab tab-node"><svg class="ic-14"><use href="#chevl"/></svg></span>
    <i class="scroll-v"></i>
    <i class="scroll-h"></i>
  </section>

  <section class="area time-area">
    <span class="btn w52 t-first"><i class="tl-ic"></i><svg class="ic-10 tl-chev"><use href="#chev"/></svg></span>
    <span class="seg line-seg ml10">
      <span class="seg-b txt w124">Playback<svg class="ic-10"><use href="#chev"/></svg></span>
      <span class="seg-b txt w105">Keying<svg class="ic-10"><use href="#chev"/></svg></span>
    </span>
    <span class="menu-i t1">View</span><span class="menu-i t2">Marker</span>
    <span class="seg ml47">
      <span class="seg-b gray w33 faded"><svg class="ic dimg"><use href="#recdot"/></svg></span>
      <span class="seg-b dark w33 faded"><svg class="ic-10"><use href="#chev"/></svg></span>
    </span>
    <span class="seg ml10 transport">
      <span class="seg-b gray"><svg class="ic-tr"><use href="#first"/></svg></span>
      <span class="seg-b gray"><svg class="ic-tr"><use href="#prevk"/></svg></span>
      <span class="seg-b gray"><svg class="ic-tr"><use href="#rev"/></svg></span>
      <span class="seg-b gray"><svg class="ic-tr"><use href="#play"/></svg></span>
      <span class="seg-b gray"><svg class="ic-tr"><use href="#nextk"/></svg></span>
      <span class="seg-b gray"><svg class="ic-tr"><use href="#last"/></svg></span>
    </span>
    <span class="frame">1</span>
    <span class="seg ml10 range">
      <span class="seg-b gray w33"><svg class="ic"><use href="#timer"/></svg></span>
      <span class="seg-b gray pair w152"><span>Start</span><span>1</span></span>
      <span class="seg-b gray pair w144"><span>End</span><span>250</span></span>
    </span>
  </section>
</div>

<div class="col-right">
  <section class="area outliner">
    <div class="hdr">
      <span class="btn w54"><svg class="ic"><use href="#outl"/></svg><svg class="ic-10"><use href="#chev"/></svg></span>
      <span class="btn w54"><svg class="ic"><use href="#layer"/></svg><svg class="ic-10"><use href="#chev"/></svg></span>
      <span class="search ml52"><svg class="ic"><use href="#search"/></svg>Search</span>
      <span class="btn w54 ml-auto"><svg class="ic"><use href="#funnel"/></svg><svg class="ic-10"><use href="#chev"/></svg></span>
      <span class="btn graybtn w33"><svg class="ic"><use href="#newcol"/></svg></span>
    </div>
    <div class="ol-body">
      <div class="ol-row r0"><span class="ol-box"><svg class="ic"><use href="#archive"/></svg></span><span>Scene Collection</span></div>
      <div class="ol-row r1">
        <svg class="ic-14 ol-arrow"><use href="#chevr"/></svg>
        <span class="ol-box"><svg class="ic"><use href="#bzc"/></svg></span><span>BézierCircle</span>
        <svg class="ic ol-w"><use href="#wrench"/></svg>
        <svg class="ic ol-c"><use href="#curve"/></svg>
        <svg class="ic ol-e"><use href="#eye"/></svg>
        <svg class="ic ol-cam"><use href="#camf"/></svg>
      </div>
    </div>
  </section>

  <section class="area props">
    <div class="hdr prop-hdr">
      <span class="btn w54"><svg class="ic"><use href="#toggles"/></svg><svg class="ic-10"><use href="#chev"/></svg></span>
      <span class="search ml135"><svg class="ic"><use href="#search"/></svg>Search</span>
      <span class="btn w33 ml-auto"><svg class="ic-12"><use href="#chev"/></svg></span>
    </div>
    <div class="prop-body">
      <aside class="tabs">
        <span class="tab t-clip"><svg class="ic"><use href="#ttool"/></svg></span>
        <i class="tab-sep s1"></i>
        <span class="tab"><svg class="ic"><use href="#trender"/></svg></span>
        <span class="tab"><svg class="ic"><use href="#toutput"/></svg></span>
        <span class="tab"><svg class="ic"><use href="#layer"/></svg></span>
        <span class="tab"><svg class="ic"><use href="#scene"/></svg></span>
        <span class="tab red"><svg class="ic"><use href="#tworld"/></svg></span>
        <i class="tab-sep s2"></i>
        <span class="tab"><svg class="ic"><use href="#tobj"/></svg></span>
        <span class="tab on"><svg class="ic"><use href="#wrenchf"/></svg></span>
        <span class="tab blue-t"><svg class="ic"><use href="#tpart"/></svg></span>
        <span class="tab blue-t"><svg class="ic"><use href="#tphys"/></svg></span>
        <span class="tab green-t"><svg class="ic"><use href="#curve"/></svg></span>
        <span class="tab"><svg class="ic"><use href="#tmat"/></svg></span>
        <i class="tab-sep s3"></i>
      </aside>
      <div class="prop-main">
        <div class="crumb">
          <svg class="ic"><use href="#obj"/></svg><span class="lbl">BézierCircle</span>
          <svg class="ic-14 crumb-arrow"><use href="#chevr"/></svg>
          <svg class="ic"><use href="#nodes"/></svg><span class="lbl">GeometryNodes</span>
          <svg class="ic dim ml-auto"><use href="#pin"/></svg>
        </div>
        <div class="addmod"><svg class="ic-18"><use href="#plus"/></svg><span>Add Modifier</span></div>
        <div class="panel">
          <div class="p-head">
            <svg class="ic-16 p-chev"><use href="#chev"/></svg>
            <svg class="ic p-ic"><use href="#nodes"/></svg>
            <span class="seg seg-dark">
              <span class="seg-b dark pname">GeometryNodes</span>
              <span class="seg-b blue w34"><svg class="ic"><use href="#editm"/></svg></span>
              <span class="seg-b blue w34"><svg class="ic"><use href="#mon"/></svg></span>
              <span class="seg-b blue w34"><svg class="ic"><use href="#camf"/></svg></span>
              <span class="seg-b dark w33"><svg class="ic-16"><use href="#chev"/></svg></span>
            </span>
            <svg class="ic-18 p-x"><use href="#x"/></svg>
            <svg class="ic-dots"><use href="#dots"/></svg>
          </div>
          <div class="p-group">
            <span class="seg-b line2 w52"><svg class="ic"><use href="#group"/></svg><svg class="ic-10"><use href="#chev"/></svg></span>
            <span class="seg-b dark gname">Geometry Nodes</span>
            <span class="seg-b gray w34"><svg class="ic dim"><use href="#shield"/></svg></span>
            <span class="seg-b gray w34"><svg class="ic"><use href="#dup"/></svg></span>
            <span class="seg-b gray w34 last"><svg class="ic-18"><use href="#x"/></svg></span>
          </div>
          <div class="fields">
            <label>Brick Size X</label><div class="fld full">0.200</div><i class="fdot"></i>
            <label>Brick Size Y</label><div class="fld full">0.100</div><i class="fdot"></i>
            <label>Brick Size Z</label><div class="fld full">0.060</div><i class="fdot"></i>
            <label>Height</label><div class="fld">5</div><span class="fattr"><svg class="ic"><use href="#sheet"/></svg></span><i class="fdot"></i>
            <label>Randomization Fa...</label><div class="fld">1.000</div><span class="fattr"><svg class="ic"><use href="#sheet"/></svg></span><i class="fdot"></i>
            <label>Gap</label><div class="fld">0.010</div><span class="fattr"><svg class="ic"><use href="#sheet"/></svg></span><i class="fdot"></i>
          </div>
          <div class="manage"><svg class="ic-14"><use href="#chevr"/></svg><span>Manage</span></div>
        </div>
      </div>
    </div>
  </section>
</div>
</main>

<footer class="status">
  <svg class="mouse m1x"><use href="#ml"/></svg><span class="st-t">Select</span>
  <svg class="mouse m2x"><use href="#mm"/></svg>
  <svg class="mouse m3x"><use href="#mr"/></svg>
  <svg class="ic st-globe"><use href="#globe"/></svg>
  <i class="st-sep"></i>
  <span class="st-ver">4.2.0</span>
</footer>
<script src="scene.js"></script>
</body>
</html>
```
FILE: styles.css
```css
* { box-sizing: border-box; }
html, body { margin: 0; padding: 0; }
body {
  width: 1920px; height: 996px; overflow: hidden;
  display: flex; flex-direction: column;
  background: #181818; color: #d4d4d4;
  font-family: Inter, "Liberation Sans", sans-serif; font-size: 18.6px;
}
i { font-style: normal; display: block; }
svg { display: block; flex: none; }
.defs { position: absolute; }
.ic { width: 24px; height: 24px; color: #d8d8d8; }
.ic-7 { width: 7px; height: 7px; color: #bbb; }
.ic-9 { width: 9px; height: 9px; }
.ic-10 { width: 11px; height: 11px; color: #d8d8d8; }
.ic-12 { width: 14px; height: 14px; color: #e0e0e0; }
.ic-14 { width: 15px; height: 15px; color: #c8c8c8; }
.ic-16 { width: 16px; height: 16px; color: #d8d8d8; }
.ic-18 { width: 18px; height: 18px; color: #d8d8d8; }
.ic-22 { width: 24px; height: 24px; }
.ic-28 { width: 30px; height: 30px; }
.ic-28s { width: 27px; height: 27px; color: #c8c8c8; }
.ic-36 { width: 36px; height: 36px; }
.ic-annot { width: 46px; height: 40px; }
.ic-cut { width: 46px; height: 34px; }
.ic-tr { width: 20px; height: 22px; color: #e8e8e8; }
.ic-tri { position: absolute; right: 4px; bottom: 4px; width: 7px; height: 7px; }
.ic-dots { width: 18px; height: 9px; color: #9a9a9a; }
.dim { color: #8a8a8a; }
.dim2 { color: #a8a8a8; }
.dimg { color: #9a9a9a; }
.faded { opacity: .62; }

.ml-auto { margin-left: auto; }
.ml6 { margin-left: 6px; } .ml9 { margin-left: 9px; } .ml10 { margin-left: 10px; }
.ml14 { margin-left: 14px; } .ml15 { margin-left: 15px; } .ml20 { margin-left: 20px; }
.ml21 { margin-left: 21px; } .ml28 { margin-left: 28px; }
.ml29 { margin-left: 29px; } .ml44 { margin-left: 44px; } .ml47 { margin-left: 47px; } .ml52 { margin-left: 52px; } .ml135 { margin-left: 135px; }

/* Title bar */
.titlebar { height: 40px; flex: none; background: #1f1f1f; display: flex; align-items: center; padding-left: 5px; }
.title-text { margin-left: 7px; padding-top: 1px; color: #e6e6e6; font: 20px "Open Sans", sans-serif; letter-spacing: -.1px; white-space: nowrap; }
.win-btns { margin-left: auto; display: flex; padding-right: 3px; }
.win-btn { width: 80px; height: 40px; display: flex; align-items: center; justify-content: center; }
.win-min { width: 16px; height: 1px; background: #ddd; }

/* Top bar */
.topbar { height: 47px; flex: none; background: #181818; display: flex; align-items: center; position: relative; }
.top-logo { margin-left: 12px; }
.menu { list-style: none; margin: -3px 0 0 18px; padding: 0; display: flex; gap: 26px; color: #d8d8d8; }
.workspaces { margin-left: 43px; width: 889px; flex: none; align-self: flex-end; height: 40px; overflow: hidden; display: flex; gap: 1px; }
.ws { padding: 7px 17px 0; background: #1d1d1d; color: #8c8c8c; border-radius: 6px 6px 0 0; white-space: nowrap; }
.selector { height: 33px; align-self: flex-start; margin-top: 6px; display: flex; border-radius: 6px; overflow: hidden; border: 1px solid #3c3c3c; background: #1d1d1d; }
.sel-scene { width: 292px; margin-left: 13px; }
.sel-layer { width: 257px; margin-left: 8px; }
.sel-ic { width: 53px; display: flex; align-items: center; justify-content: center; gap: 2px; border-right: 1px solid #3c3c3c; background: #222; }
.sel-name { flex: 1; padding-left: 13px; display: flex; align-items: center; justify-content: space-between; padding-right: 6px; color: #e4e4e4; }
.sel-b { width: 34px; display: flex; align-items: center; justify-content: center; background: #545454; border-left: 1px solid #3c3c3c; }
.off svg { color: #808080; }
.off { background: #3e3e3e; }
.sel-bend { width: 33px; }

/* Main layout */
.main { flex: 1; display: flex; min-height: 0; }
.col-left { width: 1318px; flex: none; padding-left: 1px; display: flex; flex-direction: column; gap: 2px; }
.col-right { width: 596px; flex: none; margin-left: 4px; display: flex; flex-direction: column; gap: 4px; }
.row-top { display: flex; gap: 4px; height: 401px; flex: none; }
.area { background: #303030; border-radius: 6px; overflow: hidden; position: relative; }

/* Common controls */
.hdr { height: 43px; flex: none; display: flex; align-items: center; padding: 0 12px; }
.btn { height: 34px; display: flex; align-items: center; justify-content: center; gap: 2px; border-radius: 6px; background: #2b2b2b; border: 1px solid #3c3c3c; color: #d8d8d8; flex: none; }
.graybtn { background: #545454; border-color: #545454; }
.w33 { width: 33px; } .w34 { width: 34px; } .w31 { width: 31px; } .w32 { width: 32px; }
.w20 { width: 20px; } .w44 { width: 44px; } .w52 { width: 52px; } .w54 { width: 54px; }
.w105 { width: 105px; } .w124 { width: 124px; } .w132 { width: 132px; } .w144 { width: 144px; } .w152 { width: 152px; } .w172 { width: 172px; }
.dd { justify-content: space-between; padding: 0 9px 0 13px; margin-left: 8px; }
.lbl { color: #d8d8d8; white-space: nowrap; }
.seg { display: flex; border-radius: 6px; overflow: hidden; height: 33px; flex: none; }
.seg-b { height: 100%; display: flex; align-items: center; justify-content: center; gap: 2px; flex: none; }
.seg-b + .seg-b { border-left: 1px solid #3a3a3a; }
.gray { background: #545454; }
.blue { background: #4772b3; }
.dark { background: #262626; }
.round { border-radius: 6px; }
.search { width: 199px; height: 34px; display: flex; align-items: center; gap: 10px; padding-left: 8px; border-radius: 6px; background: #1d1d1d; border: 1px solid #3c3c3c; color: #707070; flex: none; }
.side-tab { position: absolute; width: 13px; height: 24px; background: #3a3a3a; border-radius: 5px 0 0 5px; display: flex; align-items: center; justify-content: center; }

/* Spreadsheet */
.sheet-area { width: 655px; flex: none; display: flex; flex-direction: column; }
.sheet-area .seg-b { width: 33px; }
.sheet-body { height: 315px; display: flex; flex: none; overflow: hidden; }
.dataset { margin: 14px 0 0 13px; width: 250px; flex: none; padding: 6px 8px 0 9px; background: #282828; border-radius: 6px 6px 0 0; border: 1px solid #383838; border-bottom: 0; }
.ds-row { height: 37px; display: flex; align-items: center; }
.ds-row.top { gap: 0; color: #d0d0d0; }
.ds-chev { margin: 0 9px 0 2px; }
.ds-row.top span { margin-left: 15px; }
.ds-sub { position: relative; display: flex; flex-direction: column; gap: 5px; padding: 2.500px 0; }
.ds-sub::before { content: ""; position: absolute; left: 10px; top: 3px; bottom: 3px; width: 1px; background: #4a4a4a; z-index: 1; }
.ds-row.item { padding: 0 8px 0 49px; height: 32px; border-radius: 5px; color: #c6c6c6; flex: none; }
.ds-row.item span { margin-left: 15px; flex: 1; white-space: nowrap; }
.ds-row.item b { font-weight: 400; color: #808080; }
.ds-row.sel { background: #4772b3; color: #e8e8e8; }
.ds-row.sel b { color: #bcbcbc; }
.vscroll { width: 7px; height: 184px; margin: 16px 0 0 4px; background: #3a3a3a; border-radius: 4px; flex: none; }
.table { margin-left: 4px; flex: 1; display: flex; position: relative; background: repeating-linear-gradient(#2a2a2a 0 34px, #2d2d2d 34px 68px); background-position: 0 32px; }
.table-idx { width: 37px; border-right: 1px solid #1d1d1d; background: linear-gradient(#303030 0 36px, transparent 36px); }
.table-col { flex: 1; }
.table-head { height: 37px; background: #303030; border-bottom: 1px solid #1f1f1f; }
.tab-sheet { right: 0; top: 26px; }
.side-tab svg { color: #9a9a9a; }
.sheet-foot { flex: 1; display: flex; align-items: center; justify-content: flex-end; padding-right: 15px; color: #d8d8d8; }
.foot-sep { width: 1px; height: 24px; background: #8a8a8a; margin: 0 18px; }

/* 3D viewport */
.view-area { flex: 1; background: #3d3d3d; }
.scene { position: absolute; inset: 0; width: 100%; height: 100%; }
.gz { font: 700 17px Inter, sans-serif; text-anchor: middle; fill: #16233a; fill-opacity: .8; }
.view-over { position: absolute; inset: 0; }
.hdr-view { padding: 0; height: 44px; background: #3a3a3a; }
.vb { height: 33px; display: flex; align-items: center; justify-content: center; border-radius: 0 6px 6px 0; }
.tool-row { display: flex; height: 42px; }
.tool-left { width: 189px; flex: none; background: #3a3a3a; border-radius: 0 0 6px 0; padding: 5px 0 0 12px; }
.h32 { height: 32px; }
.tool-mid { width: 331px; flex: none; background: rgba(58,58,58,.7); border-radius: 8px 8px 0 0; margin-left: 2px; }
.tool-right { flex: 1; background: rgba(58,58,58,.7); border-radius: 0 0 0 6px; padding: 5px 13px 0 14px; }
.opt { height: 32px; width: 111px; background: #262626; border-radius: 6px; display: flex; align-items: center; justify-content: center; gap: 6px; color: #e0e0e0; }
.view-tools { position: absolute; left: 13px; top: 102px; width: 68px; display: flex; flex-direction: column; gap: 10px; }
.tbox { background: #222; border-radius: 6px; overflow: hidden; }
.tbox2 { border-radius: 6px 6px 0 0; height: 173px; }
.tb { height: 58px; display: flex; align-items: center; justify-content: center; position: relative; }
.tb-on { background: #4772b3; }
.bl { border-bottom: 1px solid #3a3a3a; }
.nav-giz { position: absolute; left: 596px; top: 247px; display: flex; flex-direction: column; gap: 5px; }
.nv { width: 48px; height: 48px; border-radius: 50%; background: rgba(38,38,38,.55); display: flex; align-items: center; justify-content: center; }
.tab-view { right: 0; top: 112px; }
.solid { width: 24px; height: 24px; border-radius: 50%; background: #fff; }

/* Node editor */
.node-area { height: 425px; flex: none; background-color: #1d1d1d; background-image: radial-gradient(circle, #303030 0 1px, transparent 1.300px); background-size: 62.200px 62.200px; background-position: -7px 32px; }
.wires { position: absolute; inset: 0; width: 100%; height: 100%; }
.hdr-node { position: relative; height: 46px; padding-top: 0; }
.menu-i { color: #d4d4d4; white-space: nowrap; }
.hdr-node .menu-i + .menu-i { margin-left: 25px; }
.line { background: #2b2b2b; }
.fname { width: 175px; justify-content: flex-start; padding-left: 13px; color: #e0e0e0; white-space: nowrap; }
.node-right { display: flex; align-items: center; }
.node-tools { position: absolute; left: 13px; top: 58px; width: 69px; display: flex; flex-direction: column; gap: 9px; }
.ntb { height: 58px; background: #282828; border: 1px solid #3a3a3a; border-radius: 7px; display: flex; align-items: center; justify-content: center; position: relative; }
.ntb.on { background: #4772b3; border-color: #3a5f96; }

.node { position: absolute; background: #303030; border-radius: 2px; font-size: 7.400px; line-height: 13px; color: #c6c6c6; box-shadow: 0 2px 4px rgba(0,0,0,.55); white-space: nowrap; }
.nh { height: 12px; padding-left: 16px; line-height: 12px; color: #d4d4d4; position: relative; border-radius: 2px 2px 0 0; }
.nh-c { position: absolute; left: 6px; top: 3px; width: 6px; height: 6px; color: #ccc; }
.green-h .nh { background: #1e7a63; }
.blue-h .nh { background: #246283; }
.red-h .nh { background: #83314a; }
.dark-h .nh { background: #1d1d1d; }
.n-ginput { left: 100px; top: 204px; width: 86px; height: 120px; }
.n-add1 { left: 248px; top: 77px; width: 86px; height: 87px; }
.n-comb1 { left: 250px; top: 202px; width: 86px; height: 70px; }
.n-cube { left: 370px; top: 173px; width: 85px; height: 96px; }
.n-resample { left: 503px; top: 72px; width: 86px; height: 85px; }
.n-iop1 { left: 731px; top: 56px; width: 85px; height: 160px; }
.n-align { left: 599px; top: 157px; width: 85px; height: 100px; }
.n-tangent { left: 482px; top: 228px; width: 86px; height: 29px; }
.n-add2 { left: 482px; top: 282px; width: 86px; height: 87px; }
.n-iop2 { left: 732px; top: 231px; width: 86px; height: 158px; }
.n-comb2 { left: 845px; top: 258px; width: 86px; height: 69px; }
.n-translate { left: 957px; top: 117px; width: 87px; height: 83px; }
.n-join { left: 1061px; top: 66px; width: 85px; height: 44px; }
.n-output { left: 1173px; top: 64px; width: 85px; height: 43px; }
.p1 { padding-top: 1.200px; }
.p2 { padding-top: 1.800px; }
.nr { height: 13px; padding: 0 7px; position: relative; display: flex; align-items: center; }
.ndd { height: 11px; margin-left: 6px; margin-right: 6px; padding: 0 3px 0 4px; background: #282828; border: 1px solid #3c3c3c; border-radius: 2px; display: flex; align-items: center; justify-content: space-between; line-height: 9px; }
.nf { height: 12px; margin-left: 6px; margin-right: 6px; padding: 0 6px; background: #545454; border-radius: 2px; display: flex; justify-content: space-between; align-items: center; position: relative; }
.m1 { margin-top: 1px; } .m2 { margin-top: 2px; } .m3 { margin-top: 3px; } .m4 { margin-top: 4px; }
.g1 { margin-top: 1px; }
.nr.r { justify-content: flex-end; }
.sk { position: absolute; width: 5px; height: 5px; border-radius: 50%; top: 4px; z-index: 2; }
.sk.o { right: -2.500px; }
.sk.i { left: -2.500px; }
.sk.i2 { left: -8.500px; top: 3.500px; }
.geo { background: #00d6a3; }
.val { background: #a1a1a1; border-radius: 1px; transform: rotate(45deg); }
.int { background: #598c5c; }
.vec { background: #6363c7; }
.rot { background: #a663c7; }
.roth { border: 1px solid #a663c7; }
.vech { border: 1px solid #6363c7; }
.hol { border: 1px solid #a1a1a1; border-radius: 1px; transform: rotate(45deg); }
.boolh { border: 1px solid #cca6d6; border-radius: 1px; transform: rotate(45deg); }
.empty { border: 1px solid #7a7a7a; width: 6px; height: 6px; }
.sk.multi { background: #00d6a3; height: 10px; width: 4.500px; border-radius: 2px; top: 1.500px; left: -2.300px; }
.ncheck { width: 8px; height: 9px; background: #545454; border-radius: 1px; margin-right: 2px; display: flex; align-items: center; justify-content: center; }
.ncheck.on { background: #4772b3; }
.nstack { margin: -1px 6px 0; background: #545454; border-radius: 2px; overflow: hidden; }
.nf2 { height: 12px; padding: 0 7px 0 9px; display: flex; justify-content: space-between; align-items: center; border-bottom: 1px solid #3c3c3c; }
.nf2:last-child { border-bottom: 0; }
.nf-c { white-space: nowrap; }
.nxyz { margin: 5.500px 6px 0; height: 11px; display: flex; gap: 1px; line-height: 11px; text-align: center; border-radius: 2px; overflow: hidden; }
.nxyz span { flex: 1; background: #545454; }
.nxyz .on { background: #4772b3; }
.npivot { display: flex; align-items: center; margin-top: 3.800px; height: 11px; }
.npivot label { width: 33px; text-align: right; flex: none; }
.ndd.small { flex: 1; margin: 0 6px 0 5px; }
.nfac { margin: 1px 6px 0; height: 11px; background: #4772b3; border-radius: 2px; display: flex; justify-content: space-between; padding: 0 9px; align-items: center; position: relative; }
.tab-node { right: 0; top: 70px; }
.scroll-v { position: absolute; right: 3px; top: 60px; width: 5px; height: 341px; background: #2e2e2e; border-radius: 3px; }
.scroll-h { position: absolute; left: 13px; bottom: 4px; width: 1289px; height: 5px; background: #333; border-radius: 3px; }

/* Timeline */
.time-area { height: 43px; flex: none; display: flex; align-items: center; padding-left: 13px; }
.t-first { position: relative; gap: 4px; justify-content: flex-start; padding-left: 8px; }
.line-seg { background: #2b2b2b; border: 1px solid #3c3c3c; height: 34px; }
.line-seg .seg-b { gap: 9px; }
.txt { color: #d8d8d8; }
.t1 { margin-left: 18px; }
.t2 { margin-left: 25px; }
.transport { height: 34px; }
.transport .seg-b { width: 33.700px; }
.frame { width: 125px; height: 34px; margin-left: 61px; background: #545454; border-radius: 6px; display: flex; align-items: center; justify-content: center; color: #e0e0e0; }
.range { height: 34px; }
.pair { justify-content: space-between; padding: 0 24px 0 27px; color: #e0e0e0; }
.tl-ic { width: 24px; height: 24px; flex: none; border-radius: 50%; background: conic-gradient(#eee 0 38%, #2b2b2b 38% 46%, #eee 46%); }

/* Outliner */
.outliner { height: 239px; flex: none; display: flex; flex-direction: column; }
.outliner .hdr { gap: 8px; padding: 0 12.500px; }
.outliner .ml52 { margin-left: 44px; }
.ol-body { flex: 1; margin-top: 2px; background: repeating-linear-gradient(#2b2b2b 0 34px, #2f2f2f 34px 68px); }
.ol-row { height: 34px; display: flex; align-items: center; color: #cfcfcf; position: relative; }
.ol-box { width: 34px; height: 31px; background: #4a4a4a; border-radius: 6px; display: flex; align-items: center; justify-content: center; border: 1px solid #5a5a5a; margin-right: 6px; }
.r0 { padding-left: 34px; }
.r1 { padding-left: 68px; }
.ol-arrow { position: absolute; left: 44px; top: 10px; }
.ol-w { position: absolute; left: 255px; top: 4px; color: #5680c2; }
.ol-c { position: absolute; left: 289px; top: 4px; color: #10a882; }
.ol-e { position: absolute; left: 518px; top: 4px; }
.ol-cam { position: absolute; left: 552px; top: 4px; color: #eee; }

/* Properties */
.props { flex: 1; display: flex; flex-direction: column; }
.prop-hdr { height: 41px; padding: 0 12.500px; }
.prop-body { flex: 1; display: flex; min-height: 0; }
.tabs { width: 48px; flex: none; background: #1d1d1d; overflow: hidden; display: flex; flex-direction: column; align-items: stretch; }
.tab { height: 47px; flex: none; display: flex; align-items: center; justify-content: center; padding-right: 0; margin-left: 3px; }
.tab svg { color: #b0b0b0; }
.t-clip { margin-top: -22px; }
.t-clip svg { color: #8e8e8e; }
.tab-sep { height: 1px; background: #282828; flex: none; }
.s1 { margin-bottom: 11px; }
.s2 { margin: 6.500px 0; }
.s3 { margin-top: 23px; }
.tab.on { background: #303030; border-radius: 6px 0 0 6px; }
.tab.on svg { color: #71a8ff; }
.tab.red svg { color: #b3595f; }
.blue-t svg { color: #5680c2; }
.green-t svg { color: #10a882; }
.prop-main { flex: 1; padding: 0 13px 0 15px; min-width: 0; }
.crumb { height: 64px; padding: 0 3px 0 4px; display: flex; align-items: center; }
.crumb .lbl { margin-left: 15px; }
.crumb-arrow { margin: 0 14px 0 29px; }
.addmod { height: 32px; margin-top: 14px; padding: 0 0 2px 30px; background: #545454; border-radius: 5px; display: flex; align-items: center; justify-content: center; position: relative; color: #e0e0e0; }
.addmod svg { position: absolute; left: 12px; top: 7px; }
.panel { margin-top: 19px; height: 389px; border: 1px solid #4772b3; border-radius: 5px; background: #3d3d3d; padding-top: 4px; }
.p-head { height: 32px; display: flex; align-items: center; }
.p-chev { margin-left: 12px; }
.p-ic { margin-left: 9px; }
.seg-dark { margin-left: 19px; height: 32px; }
.pname { width: 217px; justify-content: flex-start; padding-left: 13px; color: #e4e4e4; }
.seg-dark .seg-b.blue { border-left: 1px solid #3a5f96; }
.p-x { margin-left: 9px; }
.ic-dots { margin-left: 29px; margin-top: -6px; }
.p-group { margin: 19px 0 0 12px; width: 492px; height: 33px; display: flex; border-radius: 6px; overflow: hidden; }
.line2 { background: #2e2e2e; }
.gname { flex: 1; justify-content: flex-start; padding-left: 13px; color: #dcdcdc; }
.fields { margin-top: 9px; display: grid; grid-template-columns: 188px 248px 34px 1fr; row-gap: 10px; align-items: center; }
.fields label { text-align: right; color: #cfcfcf; white-space: nowrap; justify-self: end; }
.fld { margin-left: 16px; height: 32px; width: 232px; background: #545454; border-radius: 5px 0 0 5px; display: flex; align-items: center; justify-content: center; color: #e4e4e4; }
.fld.full { border-radius: 5px; }
.fattr { width: 34px; height: 32px; background: #545454; border-left: 1px solid #3d3d3d; border-radius: 0 5px 5px 0; display: flex; align-items: center; justify-content: center; }
.fdot { width: 7px; height: 7px; border-radius: 50%; background: #d8d8d8; margin-left: 15px; grid-column: 4; }
.manage { margin-top: 10px; height: 32px; padding-left: 24px; display: flex; align-items: center; gap: 9px; color: #cfcfcf; }

/* Status bar */
.status { height: 36px; flex: none; background: #181818; display: flex; align-items: center; color: #888; position: relative; }
.mouse { width: 20px; height: 26px; color: #8a8a8a; }
.m1x { margin-left: 20px; }
.st-t { margin-left: 8px; }
.m2x { margin-left: 269px; }
.m3x { margin-left: 332px; }
.st-globe { margin-left: auto; color: #666; }
.st-sep { width: 1px; height: 24px; background: #777; margin: 0 8px 0 14px; }
.st-ver { margin-right: 22px; }
```
FILE: scene.js
```js
(function () {
  // Ground grid: two perspective fans through points on the line y = 488.
  var VR = [1700, -76], VG = [-700, -8], d = '';
  var k, x;
  for (k = -14; k <= 8; k++) { x = 650 + 92 * k; d += 'M' + VR[0] + ' ' + VR[1] + 'L' + (VR[0] + (x - VR[0]) * 1.4) + ' ' + (VR[1] + (488 - VR[1]) * 1.4); }
  for (k = -8; k <= 40; k++) { x = 2100 - 93 * k; d += 'M' + VG[0] + ' ' + VG[1] + 'L' + (VG[0] + (x - VG[0]) * 1.4) + ' ' + (VG[1] + (488 - VG[1]) * 1.4); }
  document.getElementById('gridlines').setAttribute('d', d);

  // Ring of bricks.
  var rad = Math.PI / 180;
  function oT(a) { var c = Math.cos(a * rad), s = Math.sin(a * rad); return [1007 + 220 * c, 305.5 + 65.5 * s]; }
  function iT(a) { var c = Math.cos(a * rad), s = Math.sin(a * rad); return [1005 + 196 * c, 300 + 58 * s]; }
  function oB(a, f) { var c = Math.cos(a * rad), s = Math.sin(a * rad); return [1007 + (220 - 4 * f) * c, 305.5 + 65.5 * s + (31 + 6 * s) * f]; }
  function iB(a, f) { var c = Math.cos(a * rad), s = Math.sin(a * rad); return [1005 + (196 - 2 * f) * c, 300 + 58 * s + 18 * f]; }
  function arc(fn, a0, a1, f) { var p = [], n = 4, i; for (i = 0; i <= n; i++) { p.push(fn(a0 + (a1 - a0) * i / n, f)); } return p; }
  function pts(p) { return p.map(function (q) { return q[0].toFixed(1) + ',' + q[1].toFixed(1); }).join(' '); }
  function poly(p, fill, extra) { return '<polygon points="' + pts(p) + '" fill="' + fill + '" ' + (extra || '') + '/>'; }
  function line(p, col, w) { return '<polyline points="' + pts(p) + '" fill="none" stroke="' + col + '" stroke-width="' + w + '"/>'; }

  var step = 16.4, gap = 1.0, start = 27 - step * 2, out = '', tops = '', front = '', i, a0, a1;
  for (i = 0; i < 22; i++) {
    a0 = start + step * i; a1 = a0 + step - gap;
    var mid = ((a0 + a1) / 2 + 360) % 360;
    // Inner wall of the far half.
    if (mid > 178 && mid < 362) {
      var col = mid < 205 ? '#4a4a4a' : mid < 238 ? '#5c5c5c' : mid < 300 ? '#8c8c8c' : '#949494';
      out += poly(arc(iT, a0, a1, 0).concat(arc(iB, a1, a0, 1)), col, 'stroke="#333" stroke-width=".4"');
      out += line(arc(iB, a0, a1, 0.45), mid < 238 ? '#6a6a6a' : '#c4c4c4', 0.9);
    }
    // Top face.
    var tcol = mid > 180 ? '#9c9c9c' : (mid < 40 || mid > 150) ? '#8a8a8a' : '#7e7e7e';
    tops += poly(arc(oT, a0, a1, 0).concat(arc(iT, a1, a0, 0)), tcol, 'stroke="#5c5c5c" stroke-width=".5"');
    // Outer wall of the near half.
    if (mid > 350 || mid < 186) {
      var g = (mid < 48 || mid > 142) ? 'url(#brickd)' : 'url(#brick)';
      var upper = arc(function (a) { return oB(a, 0); }, a0, a1).concat(arc(function (a) { return oB(a, 0.48); }, a1, a0));
      var lower = arc(function (a) { return oB(a, 0.52); }, a0, a1).concat(arc(function (a) { return oB(a, 1); }, a1, a0));
      front += poly(upper, g) + poly(lower, g);
      front += line(arc(function (a) { return oB(a, 0.02); }, a0, a1), '#e2e2e2', 1.3);
      front += line(arc(function (a) { return oB(a, 0.54); }, a0, a1), '#dadada', 1.1);
      var edge = mid < 90 || mid > 350 ? a1 : a0;
      front += line([oB(edge, 0), oB(edge, 0.48)], '#d6d6d6', 1);
      front += line([oB(edge, 0.52), oB(edge, 1)], '#d6d6d6', 1);
      var dark = mid < 90 || mid > 350 ? a0 : a1;
      front += line([oB(dark, 0), oB(dark, 1)], '#2e2e2e', 1.2);
    }
  }
  document.getElementById('brickring').innerHTML = out + tops + front;
})();
```
